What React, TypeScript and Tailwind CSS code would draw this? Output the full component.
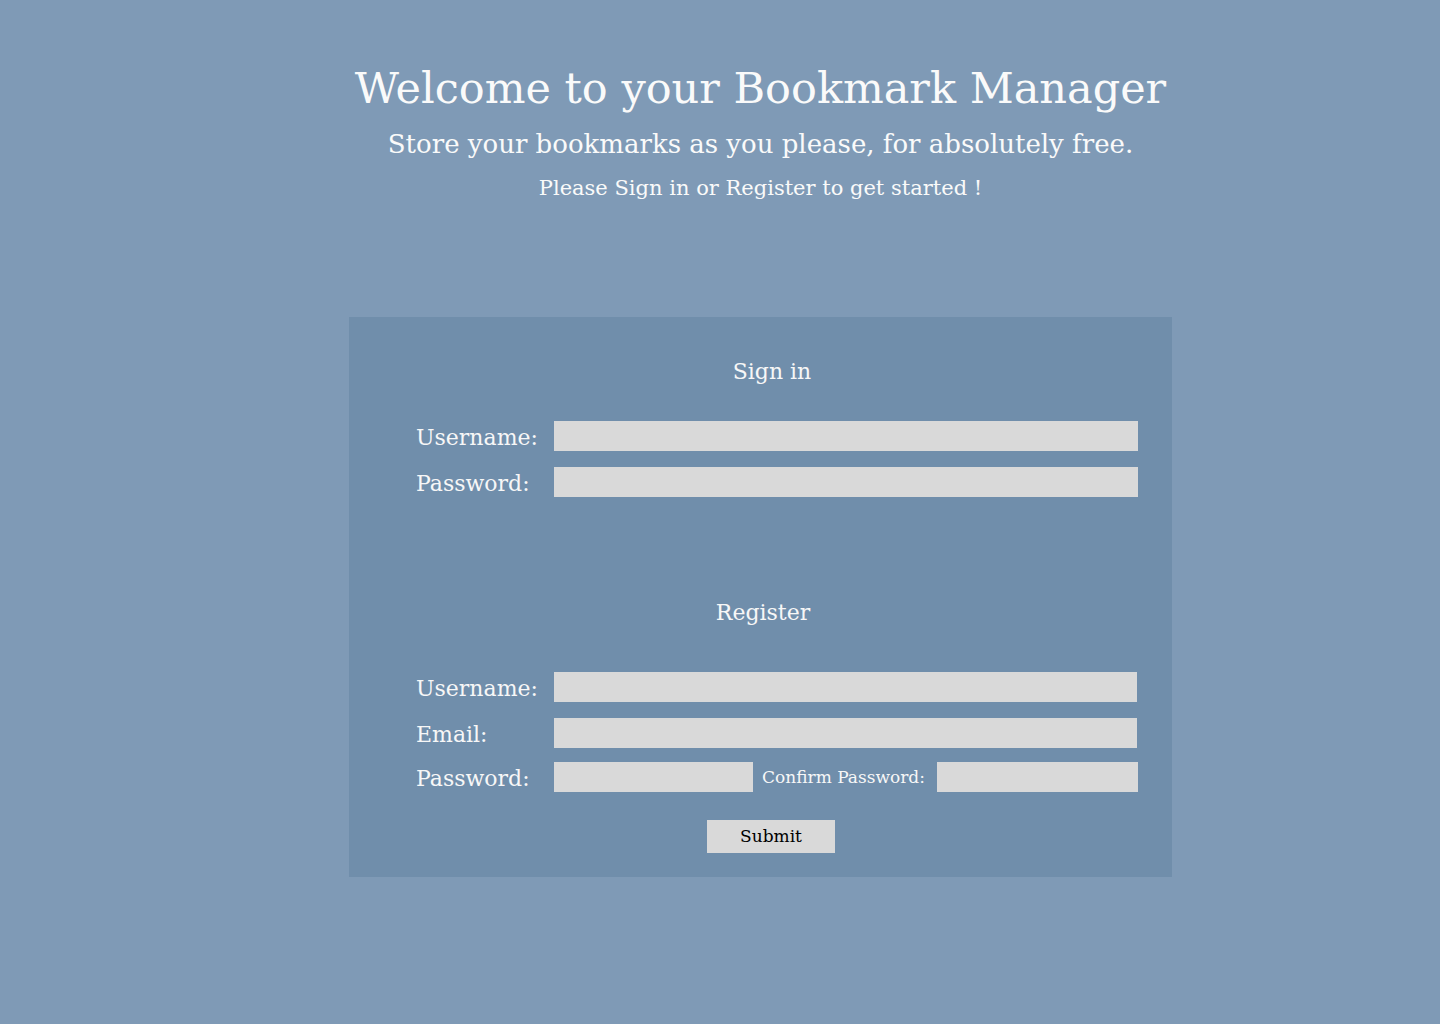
import React from "react";

const serif = { fontFamily: '"DejaVu Serif", "Liberation Serif", serif' };

function Field({ label, inputClass = "w-[584px]" }: { label: string; inputClass?: string }) {
  return (
    <div className="flex h-[30px] items-start">
      <label className="w-[138px] text-[22px] leading-[34px] text-[#f7f7f7]">{label}</label>
      <input type="text" className={`h-[30px] bg-[#d9d9d9] outline-none ${inputClass}`} />
    </div>
  );
}

export default function App() {
  return (
    <div className="min-h-screen w-full bg-[#7f9ab6]" style={serif}>
      <div className="flex flex-col items-center pl-[81px]">
        <h1 className="mt-[58px] text-[43px] leading-[60px] font-normal text-[#fafafa]">
          Welcome to your Bookmark Manager
        </h1>
        <h2 className="mt-[8px] text-[26px] leading-[36px] font-normal text-[#fafafa]">
          Store your bookmarks as you please, for absolutely free.
        </h2>
        <h3 className="mt-[11px] text-[21px] leading-[30px] font-normal text-[#fafafa]">
          Please Sign in or Register to get started !
        </h3>

        <div className="mt-[114px] w-[823px] bg-[#708eab] pl-[67px] pr-[34px] pt-[40px] pb-[24px]">
          <div className="pr-[10px] text-center text-[22px] leading-[30px] text-[#f7f7f7]">Sign in</div>
          <div className="mt-[34px] flex flex-col gap-[16px]">
            <Field label="Username:" />
            <Field label="Password:" />
          </div>

          <div className="mt-[101px] pr-[28px] text-center text-[22px] leading-[30px] text-[#f7f7f7]">Register</div>
          <div className="mt-[44px] flex flex-col">
            <Field label="Username:" inputClass="w-[583px]" />
            <div className="mt-[16px]">
              <Field label="Email:" inputClass="w-[583px]" />
            </div>
            <div className="mt-[14px] flex h-[30px] items-start">
              <label className="w-[138px] text-[22px] leading-[34px] text-[#f7f7f7]">Password:</label>
              <input type="password" className="h-[30px] w-[199px] bg-[#d9d9d9] outline-none" />
              <label className="w-[184px] pl-[9px] text-[17px] leading-[30px] text-[#f7f7f7]">Confirm Password:</label>
              <input type="password" className="h-[30px] w-[201px] bg-[#d9d9d9] outline-none" />
            </div>
          </div>
          <div className="mt-[28px] flex justify-center pr-[12px]">
            <button className="h-[33px] w-[128px] bg-[#d9d9d9] text-[17px] leading-[33px] text-black" style={serif}>
              Submit
            </button>
          </div>
        </div>
      </div>
    </div>
  );
}
